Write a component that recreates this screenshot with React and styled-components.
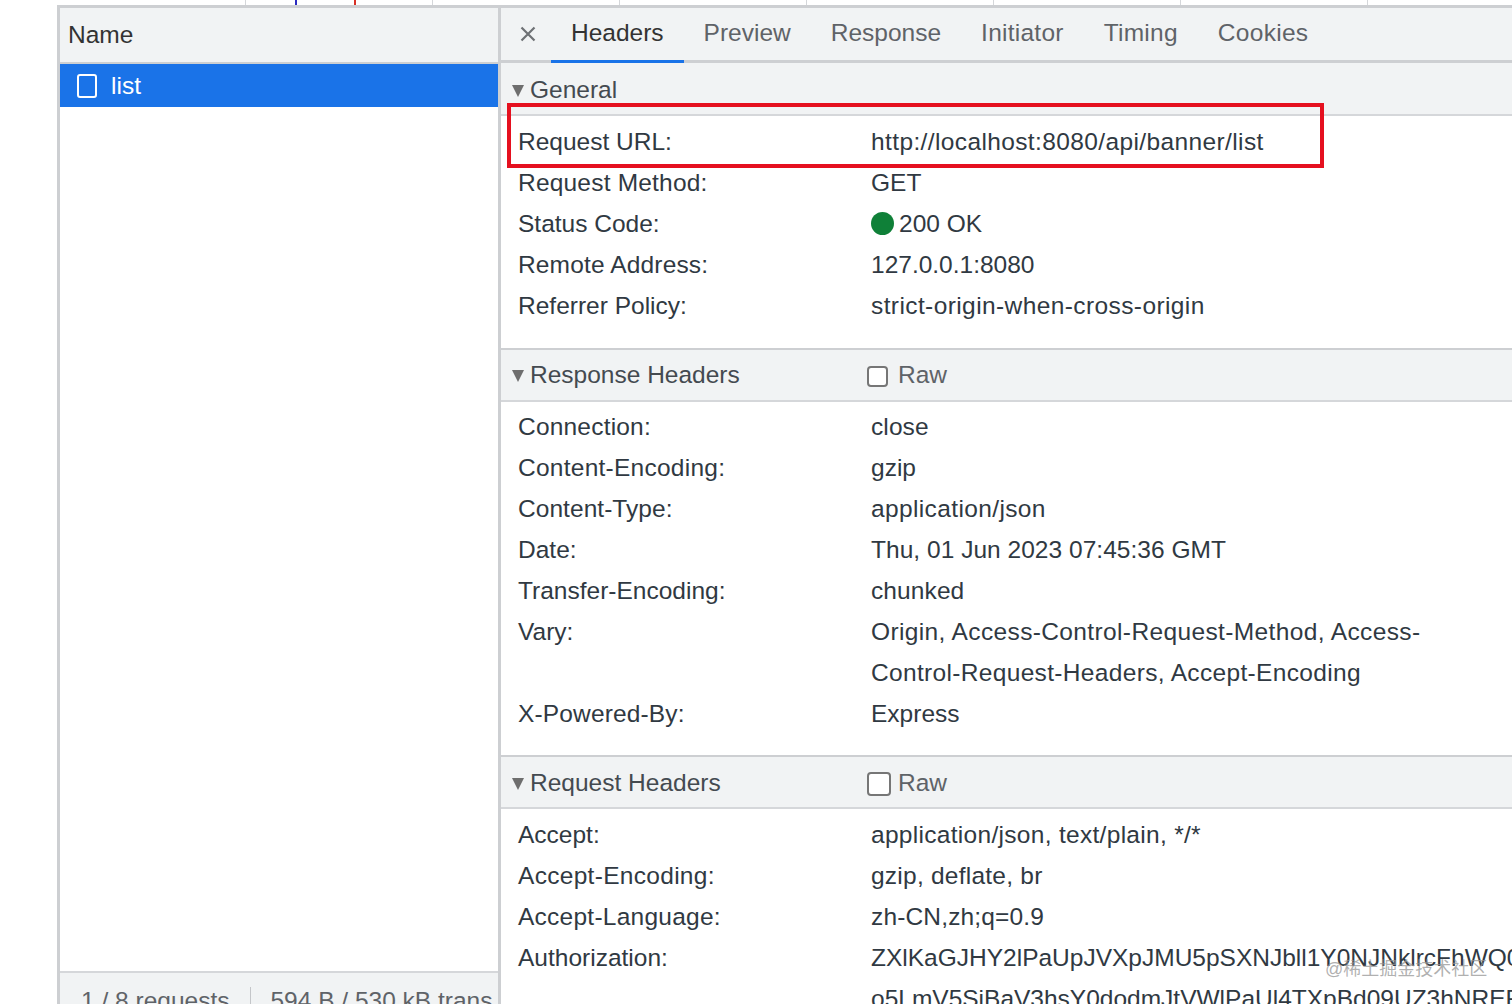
import styled, { createGlobalStyle } from 'styled-components';

const GlobalStyle = createGlobalStyle`
	html, body {
		margin: 0;
		padding: 0;
		background: #fff;
	}
	body {
		font-family: "Liberation Sans", Arial, sans-serif;
		font-size: 24.5px;
		color: #303942;
	}
`;

const Page = styled.div`
	position: relative;
	width: 1512px;
	height: 1004px;
	overflow: hidden;
	padding-left: 57px;
	box-sizing: border-box;
	display: flex;
	flex-direction: column;
`;

const Timeline = styled.div`
	position: relative;
	height: 5px;
	flex: none;
	margin-left: 3px;
	display: grid;
	grid-template-columns: 186px repeat(7, 187px);
`;

const TimelineCell = styled.div`
	border-right: 1px solid #d5d7da;
`;

const Marker = styled.div`
	position: absolute;
	top: 0;
	bottom: 0;
	left: ${(p) => p.$left}px;
	width: 2px;
	background: ${(p) => p.$color};
`;

const Main = styled.div`
	flex: 1;
	min-height: 0;
	display: flex;
	border-top: 3px solid #cdcfd2;
	border-left: 3px solid #cdcfd2;
`;

const ListPanel = styled.div`
	width: 438px;
	flex: none;
	display: flex;
	flex-direction: column;
	border-right: 3px solid #cdcfd2;
`;

const ListHeader = styled.div`
	height: 56px;
	flex: none;
	box-sizing: border-box;
	padding: 0 8px;
	display: flex;
	align-items: center;
	background: #f1f3f4;
	border-bottom: 2px solid #cdcfd2;
	color: #333;
`;

const ListRow = styled.div`
	height: 43px;
	flex: none;
	display: flex;
	align-items: center;
	gap: 14px;
	padding-left: 17px;
	background: #1a73e8;
	color: #fff;
`;

const FileIcon = styled.span`
	width: 16px;
	height: 20px;
	border: 2px solid #fff;
	border-radius: 3px;
`;

const ListBody = styled.div`
	flex: 1;
`;

const ListFooter = styled.div`
	height: 33px;
	flex: none;
	box-sizing: border-box;
	border-top: 2px solid #d5d7da;
	background: #f1f3f4;
	display: flex;
	padding-top: 14px;
	color: #5f6368;
	white-space: nowrap;
	overflow: hidden;
`;

const FooterItem = styled.div`
	padding: 0 21px 0 ${(p) => p.$left}px;
	line-height: 28px;
	${(p) => p.$divided && 'border-right: 1px solid #c4c6c9;'}
`;

const DetailPanel = styled.div`
	flex: 1;
	min-width: 0;
	display: flex;
	flex-direction: column;
	overflow: hidden;
	& > * {
		flex: none;
	}
`;

const TabBar = styled.div`
	height: 55px;
	box-sizing: border-box;
	display: flex;
	align-items: stretch;
	background: #f1f3f4;
	border-bottom: 3px solid #cdcfd2;
`;

const CloseButton = styled.div`
	width: 50px;
	flex: none;
	display: flex;
	align-items: center;
	justify-content: center;
	padding-left: 4px;
	box-sizing: border-box;
	color: #6e7175;
`;

const Tab = styled.div`
	position: relative;
	padding: 0 20px 3px;
	display: flex;
	align-items: center;
	letter-spacing: ${(p) => p.$track || 0}px;
	color: ${(p) => (p.$active ? '#333' : '#5f6368')};
	box-sizing: border-box;
	${(p) =>
		p.$active &&
		`
		&::after {
			content: "";
			position: absolute;
			left: 0;
			right: 0;
			bottom: -3px;
			height: 3px;
			background: #1a73e8;
		}
	`}
`;

const SectionHeader = styled.div`
	height: ${(p) => p.$height}px;
	box-sizing: border-box;
	display: flex;
	align-items: center;
	padding-left: 11px;
	padding-top: ${(p) => p.$top}px;
	background: #f1f3f4;
	border-top: ${(p) => (p.$first ? 0 : 2)}px solid #cdcfd2;
	border-bottom: 2px solid #d5d7da;
	color: #444a50;
	white-space: nowrap;
`;

const Triangle = styled.span`
	width: 0;
	height: 0;
	margin-top: 2px;
	border-left: 6.5px solid transparent;
	border-right: 6.5px solid transparent;
	border-top: 12px solid #6e6e6e;
	margin-right: 6px;
`;

const SectionTitle = styled.span`
	width: 337px;
	flex: none;
`;

const RawToggle = styled.span`
	display: flex;
	align-items: center;
	color: #5f6368;
`;

const RawBox = styled.span`
	width: ${(p) => p.$size}px;
	height: ${(p) => p.$size}px;
	box-sizing: border-box;
	margin-top: 2px;
	margin-right: ${(p) => 31 - p.$size}px;
	border: 2px solid #767676;
	border-radius: 4px;
	background: #fff;
`;

const SectionBody = styled.div`
	padding: ${(p) => p.$top}px 0 ${(p) => p.$bottom}px 17px;
`;

const HeaderRow = styled.div`
	display: grid;
	grid-template-columns: 353px 1fr;
	height: 41px;
	line-height: 41px;
	white-space: nowrap;
`;

const HeaderName = styled.div`
	color: #303942;
	letter-spacing: ${(p) => p.$track}px;
`;

const HeaderValue = styled.div`
	display: flex;
	align-items: center;
	color: #303942;
	letter-spacing: ${(p) => p.$track}px;
`;

const StatusDot = styled.span`
	width: 23px;
	height: 23px;
	border-radius: 50%;
	background: #0f8038;
	margin-right: 5px;
`;

const Highlight = styled.div`
	position: absolute;
	left: 507px;
	top: 103px;
	width: 817px;
	height: 65px;
	box-sizing: border-box;
	border: 4px solid #e5101f;
`;

const Watermark = styled.div`
	position: absolute;
	left: 1325px;
	top: 957px;
	font-family: "Liberation Sans", "Noto Sans CJK SC", sans-serif;
	font-size: 18px;
	line-height: 24px;
	color: rgba(150, 150, 150, 0.75);
	white-space: nowrap;
`;

const tabs = [
	{ label: 'Headers' },
	{ label: 'Preview' },
	{ label: 'Response' },
	{ label: 'Initiator', track: 0.25 },
	{ label: 'Timing', track: 0.25 },
	{ label: 'Cookies', track: 0.3 },
];

// name, value, letter-spacing of the name, letter-spacing of the value
const general = [
	['Request URL:', 'http://localhost:8080/api/banner/list', 0, 0.38],
	['Request Method:', 'GET', 0.2, 0],
	['Status Code:', '200 OK', 0, 0, true],
	['Remote Address:', '127.0.0.1:8080', 0.15, 0],
	['Referrer Policy:', 'strict-origin-when-cross-origin', 0, 0.4],
];

const responseHeaders = [
	['Connection:', 'close', 0.2, 0.1],
	['Content-Encoding:', 'gzip', 0.25, 0],
	['Content-Type:', 'application/json', 0.05, 0.37],
	['Date:', 'Thu, 01 Jun 2023 07:45:36 GMT', 0, 0.03],
	['Transfer-Encoding:', 'chunked', 0, 0.1],
	['Vary:', 'Origin, Access-Control-Request-Method, Access-', 0, 0.37],
	['', 'Control-Request-Headers, Accept-Encoding', 0, 0.33],
	['X-Powered-By:', 'Express', 0.15, 0],
];

const requestHeaders = [
	['Accept:', 'application/json, text/plain, */*', 0, 0.3],
	['Accept-Encoding:', 'gzip, deflate, br', 0.3, 0.24],
	['Accept-Language:', 'zh-CN,zh;q=0.9', 0.25, 0.15],
	['Authorization:', 'ZXlKaGJHY2lPaUpJVXpJMU5pSXNJbll1Y0NJNklrcFhWQ0o', 0, 0],
	['', 'o5LmV5SiBaV3hsY0dodmJtVWlPaUl4TXpBd09UZ3hNREF', 0, 0],
];

const Rows = ({ items, top, bottom }) => (
	<SectionBody $top={top} $bottom={bottom}>
		{items.map(([name, value, nameTrack, valueTrack, status], i) => (
			<HeaderRow key={i}>
				<HeaderName $track={nameTrack}>{name}</HeaderName>
				<HeaderValue $track={valueTrack}>
					{status && <StatusDot />}
					{value}
				</HeaderValue>
			</HeaderRow>
		))}
	</SectionBody>
);

const Section = ({ title, rawSize, height, headerTop, first, items, top, bottom }) => (
	<>
		<SectionHeader $height={height} $top={headerTop} $first={first}>
			<Triangle />
			<SectionTitle>{title}</SectionTitle>
			{rawSize && (
				<RawToggle>
					<RawBox $size={rawSize} />
					Raw
				</RawToggle>
			)}
		</SectionHeader>
		<Rows items={items} top={top} bottom={bottom} />
	</>
);

export default function App() {
	return (
		<Page>
			<GlobalStyle />
			<Timeline>
				{Array.from({ length: 8 }, (_, i) => (
					<TimelineCell key={i} />
				))}
				<Marker $left={235} $color="#2a2ac0" />
				<Marker $left={294} $color="#d93025" />
			</Timeline>
			<Main>
				<ListPanel>
					<ListHeader>Name</ListHeader>
					<ListRow>
						<FileIcon />
						list
					</ListRow>
					<ListBody />
					<ListFooter>
						<FooterItem $left={21} $divided>
							1 / 8 requests
						</FooterItem>
						<FooterItem $left={19}>594 B / 530 kB trans</FooterItem>
					</ListFooter>
				</ListPanel>
				<DetailPanel>
					<TabBar>
						<CloseButton>
							<svg width="16" height="16" viewBox="0 0 16 16" fill="none" stroke="currentColor" strokeWidth="2.2">
								<path d="M1.5 1.5l13 13M14.5 1.5l-13 13" />
							</svg>
						</CloseButton>
						{tabs.map((tab, i) => (
							<Tab key={tab.label} $active={i === 0} $track={tab.track}>
								{tab.label}
							</Tab>
						))}
					</TabBar>
					<Section title="General" height={53} headerTop={2} first items={general} top={5} bottom={22} />
					<Section title="Response Headers" rawSize={21} height={54} headerTop={0} items={responseHeaders} top={4} bottom={21} />
					<Section title="Request Headers" rawSize={24} height={54} headerTop={2} items={requestHeaders} top={5} bottom={0} />
				</DetailPanel>
			</Main>
			<Highlight />
			<Watermark>@稀土掘金技术社区</Watermark>
		</Page>
	);
}
